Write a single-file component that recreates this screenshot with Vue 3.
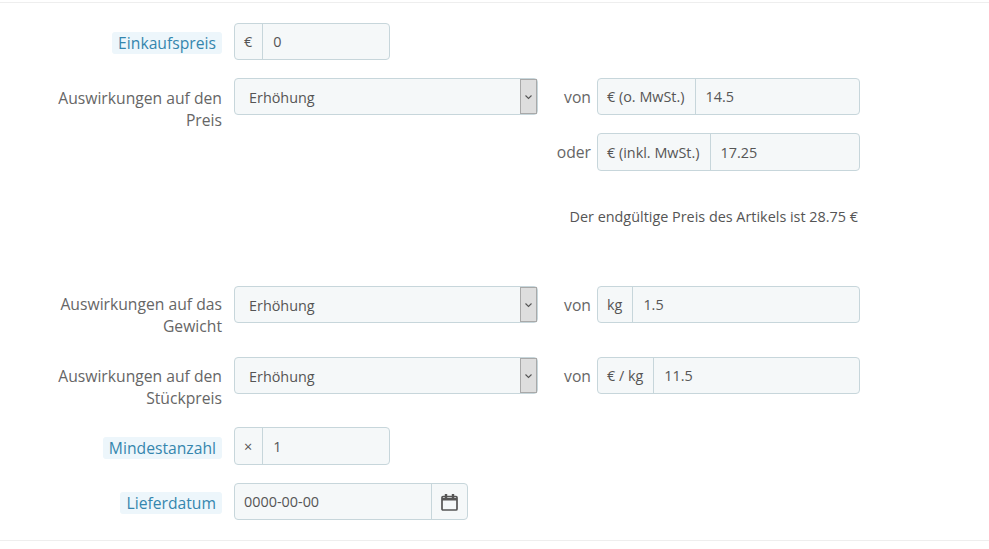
<script setup>
const dropdown = 'Erhöhung'
</script>

<template>
  <div class="page">
    <div class="form-row first">
      <div class="label"><span class="required">Einkaufspreis</span></div>
      <div class="input-group small">
        <span class="addon">€</span>
        <input class="control" value="0" />
      </div>
    </div>

    <div class="form-row impact price">
      <div class="label">Auswirkungen auf den Preis</div>
      <div class="select">
        <span class="select-text">{{ dropdown }}</span>
        <span class="select-btn">
          <svg width="9" height="6" viewBox="0 0 9 6" fill="none" stroke="#555" stroke-width="1.1"><path d="M1.5 1.5l3 3 3-3" /></svg>
        </span>
      </div>
      <div class="amounts">
        <div class="amount">
          <span class="word">von</span>
          <div class="input-group wide">
            <span class="addon">€ (o. MwSt.)</span>
            <input class="control" value="14.5" />
          </div>
        </div>
        <div class="amount second">
          <span class="word">oder</span>
          <div class="input-group wide tall">
            <span class="addon">€ (inkl. MwSt.)</span>
            <input class="control" value="17.25" />
          </div>
        </div>
        <p class="final">Der endgültige Preis des Artikels ist 28.75 €</p>
      </div>
    </div>

    <div class="form-row impact weight">
      <div class="label">Auswirkungen auf das Gewicht</div>
      <div class="select">
        <span class="select-text">{{ dropdown }}</span>
        <span class="select-btn">
          <svg width="9" height="6" viewBox="0 0 9 6" fill="none" stroke="#555" stroke-width="1.1"><path d="M1.5 1.5l3 3 3-3" /></svg>
        </span>
      </div>
      <div class="amounts">
        <div class="amount">
          <span class="word">von</span>
          <div class="input-group wide">
            <span class="addon">kg</span>
            <input class="control" value="1.5" />
          </div>
        </div>
      </div>
    </div>

    <div class="form-row impact unit">
      <div class="label">Auswirkungen auf den Stückpreis</div>
      <div class="select">
        <span class="select-text">{{ dropdown }}</span>
        <span class="select-btn">
          <svg width="9" height="6" viewBox="0 0 9 6" fill="none" stroke="#555" stroke-width="1.1"><path d="M1.5 1.5l3 3 3-3" /></svg>
        </span>
      </div>
      <div class="amounts">
        <div class="amount">
          <span class="word">von</span>
          <div class="input-group wide">
            <span class="addon">€ / kg</span>
            <input class="control" value="11.5" />
          </div>
        </div>
      </div>
    </div>

    <div class="form-row minimum">
      <div class="label"><span class="required">Mindestanzahl</span></div>
      <div class="input-group small tall">
        <span class="addon">×</span>
        <input class="control" value="1" />
      </div>
    </div>

    <div class="form-row delivery">
      <div class="label"><span class="required">Lieferdatum</span></div>
      <div class="input-group date">
        <input class="control date-input" value="0000-00-00" />
        <span class="addon after">
          <svg width="17" height="18" viewBox="0 0 17 18" fill="none" stroke="#555">
            <rect x="1" y="3.5" width="15" height="13.5" rx="1" stroke-width="1.7" />
            <path d="M1 6.2h15" stroke-width="2.6" />
            <path d="M5 1v4M12 1v4" stroke-width="2.4" />
          </svg>
        </span>
      </div>
    </div>
  </div>
</template>

<style>
body {
  margin: 0;
  background: #fff;
}
</style>

<style scoped>
.page {
  box-sizing: border-box;
  width: 989px;
  height: 539px;
  border-top: 1px solid #eee;
  border-bottom: 1px solid #eee;
  margin-top: 2px;
  padding-top: 20px;
  font-family: "Open Sans", sans-serif;
  font-size: 14.4px;
  color: #555;
}

.form-row {
  display: flex;
  align-items: flex-start;
}

.impact { margin-top: 18px; }
.weight { margin-top: 59px; }
.unit { margin-top: 20px; }
.minimum { margin-top: 18px; }
.delivery { margin-top: 18px; }

.label {
  width: 222px;
  margin-right: 12px;
  padding-left: 45px;
  flex-shrink: 0;
  text-align: right;
  font-size: 15.7px;
  line-height: 22px;
  padding-top: 9px;
  box-sizing: border-box;
  color: #666;
}

.weight .label { padding-top: 7px; }
.unit .label { padding-top: 8px; }
.minimum .label { padding-top: 10px; }

.required {
  display: inline-block;
  padding: 0 6px;
  border-radius: 3px;
  background: #edf6fb;
  color: #3586ae;
}

.input-group {
  display: flex;
  box-sizing: border-box;
  height: 37px;
  border: 1px solid #c7d6db;
  border-radius: 4px;
  background: #f5f8f9;
}

.tall { height: 38px; }
.small { width: 156px; }
.wide { width: 263px; }
.date { width: 234px; }

.addon {
  display: flex;
  align-items: center;
  padding: 0 10px 0 9px;
  border-right: 1px solid #c7d6db;
  white-space: nowrap;
  color: #555;
}

.addon.after {
  border-right: none;
  border-left: 1px solid #c7d6db;
  padding: 0 9px;
}

.control {
  flex: 1;
  min-width: 0;
  border: none;
  outline: none;
  background: transparent;
  padding: 0 10px;
  font-family: inherit;
  font-size: 14.4px;
  color: #555;
}

.date-input { padding: 0 9px; }

.select {
  display: flex;
  align-items: center;
  justify-content: space-between;
  box-sizing: border-box;
  width: 304px;
  height: 37px;
  padding-left: 14px;
  border: 1px solid #c7d6db;
  border-radius: 4px;
  background: #f5f8f9;
}

.select-text { padding-top: 2px; }

.select-btn {
  display: flex;
  align-items: center;
  justify-content: center;
  box-sizing: border-box;
  width: 17px;
  height: 35px;
  border: 1px solid #a9a9a9;
  background: #dedede;
}

.amounts {
  margin-left: 18px;
}

.amount {
  display: flex;
  align-items: center;
  justify-content: flex-end;
  width: 304px;
}

.second { margin-top: 18px; }

.word {
  margin-right: 6px;
  font-size: 15.7px;
  color: #666;
}

.final {
  margin: 36px 2px 0 0;
  text-align: right;
  font-size: 14.4px;
  line-height: 20px;
}
</style>
